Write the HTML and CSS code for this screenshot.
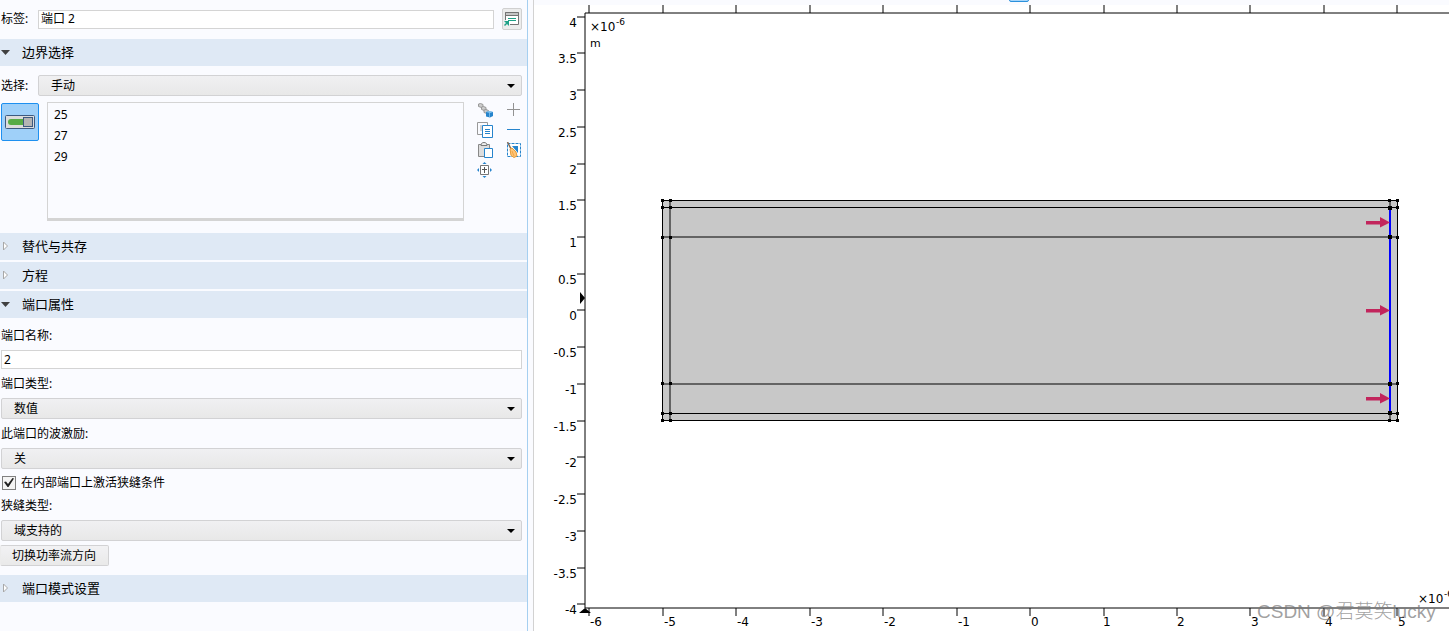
FILE: index.html
```html
<!DOCTYPE html>
<html lang="zh-CN">
<head>
<meta charset="utf-8">
<title>端口 2</title>
<link rel="stylesheet" href="styles.css">
</head>
<body>
<div class="app">
  <main class="settings">
    <div class="row label-row">
      <label class="row-label" for="tag">标签:</label>
      <input class="text-input" id="tag" type="text" value="端口 2">
      <button class="goto" type="button" aria-label="转到源">
        <svg width="16" height="16" viewBox="0 0 16 16">
          <path d="M1.500 9V1.500h13v12H6" fill="#fff" stroke="#737373"/>
          <path d="M1.500 4.500v-3h13v3z" fill="#c4c4c4" stroke="#737373"/>
          <path d="M4 7.500h8M4 9.500h8" stroke="#1fa187"/>
          <path d="M0 10h5v5l-2-2-2 2-1-1 2-2z" fill="#1fa187"/>
        </svg>
      </button>
    </div>

    <button class="section" type="button" aria-expanded="true"><svg class="chev" width="10" height="10"><path d="M1 3h9L5.500 8z" fill="#404040"/></svg>边界选择</button>

    <div class="row selection-row">
      <label class="row-label" for="selection">选择:</label>
      <div class="dropdown"><select id="selection"><option>手动</option></select></div>
    </div>
    <div class="row entities">
      <button class="active-toggle" type="button" aria-pressed="true" aria-label="激活选择">
        <svg width="32" height="16" viewBox="0 0 32 16">
          <rect x="1.500" y="1.500" width="29" height="13" rx="1" fill="#dcdcdc" stroke="#3d5a80"/>
          <path d="M7 5h12v6H7a3 3 0 0 1 0-6z" fill="#57ab46"/>
          <rect x="19.500" y="3.500" width="9" height="9" fill="#b4b4b4" stroke="#3d5a80"/>
        </svg>
      </button>
      <ul class="entity-list"><li>25</li><li>27</li><li>29</li></ul>
      <div class="tools">
        <button type="button" aria-label="创建选择">
          <svg width="16" height="16" viewBox="0 0 16 16">
            <g fill="#ccc" stroke="#999"><path d="M1.500 2l2-.500 2.500 1v2.500l-1.500.500-3-1z"/><path d="M4.500 5l2-.500 2.500 1V8l-1.500.500-3-1z"/><path d="M7 8l2-.500 2.500 1V11l-1.500.500-3-1z"/></g>
            <path d="M9 10l3-1 4 1v4l-3 1.500-4-1z" fill="#2684cc"/><path d="M9 10l3-1 4 1-3 1z" fill="#8bc7ef"/><path d="M12.500 11v4" stroke="#70b4e5"/>
          </svg>
        </button>
        <button type="button" aria-label="添加到选择"><svg width="16" height="16"><path d="M8.500 1v13M2 7.500h13" stroke="#929292"/></svg></button>
        <button type="button" aria-label="复制选择">
          <svg width="16" height="16" viewBox="0 0 16 16"><path d="M5.500 12.500h-5v-12h10v3" fill="none" stroke="#999"/><path d="M3 4h2M3 6h2M3 8h2" stroke="#aaa"/><path d="M5.500 3.500h10v12h-10z" fill="#fff" stroke="#2684cc"/><path d="M8 7.500h5M8 9.500h5M8 11.500h5" stroke="#2684cc"/></svg>
        </button>
        <button type="button" aria-label="从选择中移除"><svg width="16" height="16"><path d="M2 7.500h13" stroke="#2684cc"/></svg></button>
        <button type="button" aria-label="粘贴选择">
          <svg width="16" height="16" viewBox="0 0 16 16"><path d="M1.500 2.500h11v12h-11z" fill="#ddd" stroke="#888"/><path d="M4 3.500c0-2 1-3 3-3s3 1 3 3z" fill="#eee" stroke="#777"/><path d="M7.500 6.500h8v9h-8z" fill="#fff" stroke="#2684cc"/></svg>
        </button>
        <button type="button" aria-label="清除选择">
          <svg width="16" height="16" viewBox="0 0 16 16"><path d="M2.500 1.500h13v13h-13z" fill="#fff" stroke="#2684cc" stroke-dasharray="3 1"/><path d="M7 4h6v7z" fill="#2684cc"/><path d="M2.500 0l4 8" stroke="#806a58" stroke-width="1.500"/><path d="M5 7l2-1 4 4 1 4-3 1.500-3-2z" fill="#ffc477" stroke="#e59b38"/><path d="M7 9l2 5" stroke="#f1a747"/></svg>
        </button>
        <button type="button" aria-label="缩放到选择">
          <svg width="16" height="16" viewBox="0 0 16 16"><path d="M3.500 3.500h8v9h-8z" fill="#fff" stroke="#777"/><path d="M7.500 5v6M5 7.500h5" stroke="#555"/><path d="M5.500 2h4l-2-2zM5.500 14h4l-2 2zM2 6v4L0 8zM13 6v4l2-2z" fill="#2684cc"/></svg>
        </button>
      </div>
    </div>

    <div class="section-group">
      <button class="section" type="button" aria-expanded="false"><svg class="chev" width="10" height="10"><path d="M3.500 1v8l4-4z" fill="#fff" stroke="#a8a8a8"/></svg>替代与共存</button>
      <button class="section" type="button" aria-expanded="false"><svg class="chev" width="10" height="10"><path d="M3.500 1v8l4-4z" fill="#fff" stroke="#a8a8a8"/></svg>方程</button>
      <button class="section" type="button" aria-expanded="true"><svg class="chev" width="10" height="10"><path d="M1 3h9L5.500 8z" fill="#404040"/></svg>端口属性</button>
    </div>

    <div class="fields">
      <label class="field-label" for="name">端口名称:</label>
      <input class="text-input" id="name" type="text" value="2">
      <label class="field-label" for="type">端口类型:</label>
      <div class="dropdown"><select id="type"><option>数值</option></select></div>
      <label class="field-label" for="wave">此端口的波激励:</label>
      <div class="dropdown"><select id="wave"><option>关</option></select></div>
      <label class="check"><input type="checkbox" checked>在内部端口上激活狭缝条件</label>
      <label class="field-label slit" for="slit">狭缝类型:</label>
      <div class="dropdown"><select id="slit"><option>域支持的</option></select></div>
    </div>
    <button class="flip" type="button">切换功率流方向</button>
    <button class="section" type="button" aria-expanded="false"><svg class="chev" width="10" height="10"><path d="M3.500 1v8l4-4z" fill="#fff" stroke="#a8a8a8"/></svg>端口模式设置</button>
  </main>

  <section class="graphics" aria-label="图形">
    <svg class="plot" viewBox="534 0 915 631" preserveAspectRatio="xMinYMin meet">
      <path d="M534 0h915v5H534z" fill="#fafbff"/>
      <path d="M1009.500 0q0 1.500 1.500 1.500h16q1.500 0 1.500-1.500" fill="#a5d5fa" stroke="#2b91dc"/>
      <g stroke="#000" fill="none">
        <path d="M1449 13H585V608H1449"/>
        <path d="M577 17h8M577 53h8M577 90h8M577 127h8M577 164h8M577 200h8M577 237h8M577 274h8M577 310h8M577 347h8M577 384h8M577 421h8M577 457h8M577 494h8M577 531h8M577 568h8M577 604h8"/>
        <path d="M589 5v8M663 5v8M736 5v8M810 5v8M883 5v8M957 5v8M1030 5v8M1104 5v8M1177 5v8M1250 5v8M1324 5v8M1397 5v8"/>
        <path d="M589 608v8M663 608v8M736 608v8M810 608v8M883 608v8M957 608v8M1030 608v8M1104 608v8M1177 608v8M1250 608v8M1324 608v8M1397 608v8"/>
      </g>
      <path d="M580 292v12l5-6zM579 613h12l-6-5z"/>
      <g class="ticks-y">
        <text x="577" y="27">4</text><text x="577" y="63">3.5</text><text x="577" y="100">3</text><text x="577" y="137">2.5</text><text x="577" y="174">2</text><text x="577" y="210">1.5</text><text x="577" y="247">1</text><text x="577" y="284">0.5</text><text x="577" y="320">0</text><text x="577" y="357">-0.5</text><text x="577" y="394">-1</text><text x="577" y="431">-1.5</text><text x="577" y="467">-2</text><text x="577" y="504">-2.5</text><text x="577" y="541">-3</text><text x="577" y="578">-3.5</text><text x="577" y="614">-4</text>
      </g>
      <g class="ticks-x">
        <text x="590" y="626">-6</text><text x="664" y="626">-5</text><text x="737" y="626">-4</text><text x="811" y="626">-3</text><text x="884" y="626">-2</text><text x="958" y="626">-1</text><text x="1031" y="626">0</text><text x="1103" y="626">1</text><text x="1177" y="626">2</text><text x="1251" y="626">3</text><text x="1325" y="626">4</text><text x="1398" y="626">5</text>
      </g>
      <text x="590" y="31">×10</text><text class="power" x="616" y="25">-6</text><text class="unit" x="590" y="47">m</text>
      <text x="1418" y="603">×10</text><text class="power" x="1444" y="597">-6</text>

      <path d="M662 200h736v221H662z" fill="#c8c8c8"/>
      <g stroke="#000" fill="none">
        <path d="M662.500 200.500h735v220h-735zM662 207.500h735M662 237h735M662 384h735M662 413.500h735M670 200v221M1390 200v221"/>
      </g>
      <path d="M1390 208v205" stroke="#00f" stroke-width="2"/>
      <path d="M661 199h3v3h-3zM669 199h3v3h-3zM1388 199h3v3h-3zM1396 199h3v3h-3zM661 206h3v3h-3zM669 206h3v3h-3zM1388 206h4v4h-4zM1396 206h3v3h-3zM661 236h3v3h-3zM669 236h3v3h-3zM1388 235h4v4h-4zM1396 236h3v3h-3zM661 382h3v3h-3zM669 382h3v3h-3zM1388 382h4v4h-4zM1396 382h3v3h-3zM661 412h3v3h-3zM669 412h3v3h-3zM1388 411h4v4h-4zM1396 412h3v3h-3zM661 419h3v3h-3zM669 419h3v3h-3zM1388 419h3v3h-3zM1396 419h3v3h-3z"/>
      <path d="M1366 221h14v-4l10 5.500-10 5v-3h-14zM1366 309h14v-4l10 5.500-10 5v-3h-14zM1366 397h14v-4l10 5.500-10 5v-3h-14z" fill="#c2255c"/>
      <text class="watermark" x="1257" y="618">CSDN @君莫笑lucky</text>
    </svg>
  </section>
</div>
</body>
</html>
```
FILE: styles.css
```css
* { box-sizing: border-box; }
body {
  margin: 0;
  background: #fafbff;
  color: #000;
  font: 12px/16px "Noto Sans", "Noto Sans CJK SC", sans-serif;
}
button, input, select { font: inherit; color: inherit; margin: 0; }
.app { display: grid; grid-template-columns: minmax(0, 533fr) minmax(0, 916fr); min-height: 100vh; overflow: hidden; }
.settings {
  display: flex;
  flex-direction: column;
  margin-right: 5px;
  border-right: 1px solid #a5cff0;
}
.row { display: flex; padding-right: 5px; }
.row-label { flex: none; width: 38px; padding-left: 1px; }
.label-row { align-items: center; padding-top: 8px; margin-bottom: 9px; }
.label-row .text-input { flex: 1; padding-bottom: 2px; }
.text-input {
  width: 100%;
  min-width: 0;
  height: 19px;
  padding: 0 2px;
  border: 1px solid #d4d4d4;
  background: #fff;
}
.goto {
  display: flex;
  align-items: center;
  justify-content: center;
  width: 20px;
  height: 22px;
  margin-left: 8px;
  padding: 0;
  border: 1px solid #d0d0d0;
  border-radius: 2px;
  background: #ececec;
}
.section {
  display: flex;
  align-items: center;
  gap: 12px;
  width: 100%;
  height: 27px;
  padding: 0 0 2px;
  border: 0;
  background: #dfe9f5;
  font-size: 13px;
  text-align: left;
}
.chev { flex: none; }
.selection-row { align-items: center; margin: 9px 0 6px; }
.selection-row .dropdown { flex: 1; }
.dropdown { position: relative; }
.dropdown::after {
  content: "";
  position: absolute;
  right: 7px;
  top: 9px;
  border: 4px solid transparent;
  border-top-color: #000;
  border-bottom: 0;
  pointer-events: none;
}
.dropdown select {
  display: block;
  appearance: none;
  width: 100%;
  height: 21px;
  padding: 0 20px 0 12px;
  border: 1px solid #d2d2d4;
  border-radius: 2px;
  background: linear-gradient(#f0f0f2, #e8e8e8);
}
.entities { align-items: flex-start; margin-bottom: 12px; }
.active-toggle {
  display: flex;
  align-items: center;
  justify-content: center;
  width: 38px;
  height: 38px;
  margin: 1px 8px 0 1px;
  padding: 0;
  border: 1px solid #1e90f0;
  border-radius: 2px;
  background: #9fd0f9;
}
.entity-list {
  flex: 1;
  height: 119px;
  margin: 0;
  padding: 1px 6px;
  border: 1px solid #d4d4d4;
  border-bottom-width: 3px;
  list-style: none;
  line-height: 21px;
}
.tools { display: grid; grid-template-columns: 16px 16px; column-gap: 12px; row-gap: 4px; margin: 0 1px 0 13px; }
.tools button { width: 16px; height: 16px; padding: 0; border: 0; background: none; }
.tools svg { display: block; }
.section-group { display: grid; gap: 2px; }
.fields { display: flex; flex-direction: column; padding: 10px 5px 4px 1px; }
.field-label { height: 29px; padding-top: 7px; }
.fields .field-label:first-child { height: 22px; padding-top: 0; }
.check { display: flex; align-items: center; gap: 5px; height: 27px; padding-left: 1px; }
.check input {
  appearance: none;
  display: grid;
  place-items: center;
  width: 14px;
  height: 14px;
  border: 1px solid #808080;
  background: #f4f4f4;
}
.check input:checked::before {
  content: "";
  width: 10px;
  height: 10px;
  background: #222;
  clip-path: polygon(0 45%, 20% 40%, 40% 65%, 85% 5%, 100% 10%, 45% 95%, 35% 95%);
}
.fields .slit { height: 24px; padding-top: 2px; }
.flip {
  align-self: flex-start;
  height: 21px;
  margin-bottom: 9px;
  padding: 0 12px 0 11px;
  border: 1px solid #d2d2d4;
  border-left-color: #ececec;
  border-radius: 2px;
  background: linear-gradient(#f2f2f4, #e9e9e9);
}
.graphics { border-left: 1px solid #d2d2d2; background: #fff; }
.plot { display: block; width: 100%; font: 12px "DejaVu Sans", sans-serif; }
.ticks-y { text-anchor: end; }
.power { font-size: 9px; }
.unit { font-size: 11px; }
.watermark { font: 300 19px "Liberation Sans", "Noto Sans CJK SC", sans-serif; fill: #777; fill-opacity: 0.7; }
```
